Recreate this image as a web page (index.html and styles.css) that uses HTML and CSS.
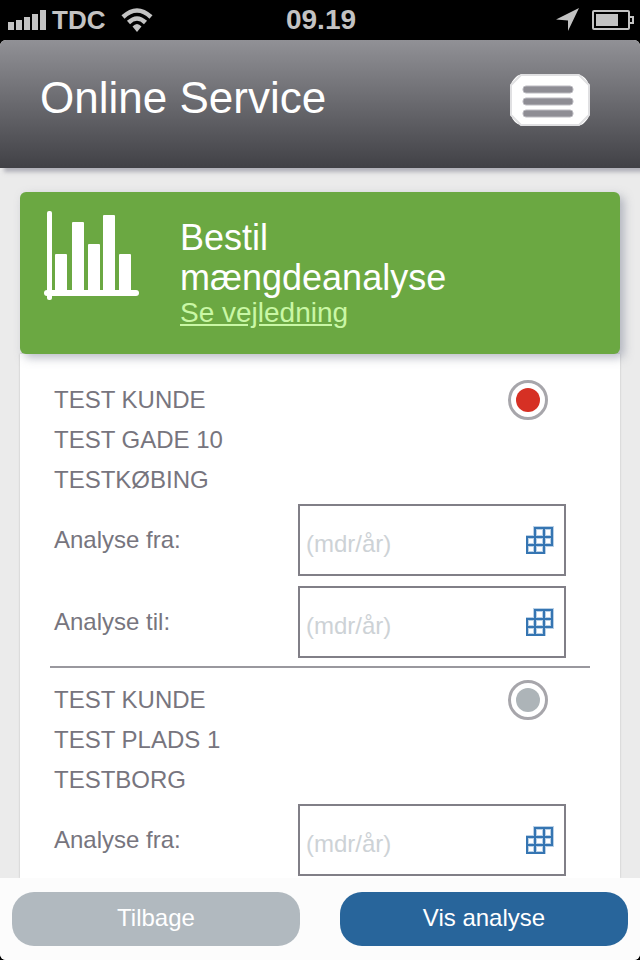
FILE: index.html
```html
<!doctype html>
<html lang="da">
	<head>
		<meta charset="UTF-8">
		<meta name="viewport" content="width=device-width, initial-scale=1">
		<title>Online Service</title>
		<link rel="stylesheet" href="styles.css">
	</head>
<body>
	<!-- status bar -->
	<div class="status">
		<div class="side">
			<svg class="signal" width="38" height="20" viewBox="0 0 38 20" fill="#c3c3c3">
				<path d="M0 12h6v8H0zM8 10h6v10H8zM16 7h6v13h-6zM24 4h6v16h-6zM32 0h6v20h-6z"/>
			</svg>
			<span class="carrier">TDC</span>
			<svg class="wifi" width="32" height="24" viewBox="0 0 32 24" fill="none" stroke="#c3c3c3">
				<path d="M2 9Q16-4 30 9" stroke-width="4.500"/>
				<path d="M7.500 14.500Q16 6.500 24.500 14.500" stroke-width="4.500"/>
				<path d="M16 24L11.500 18.500Q16 13.500 20.500 18.500z" fill="#c3c3c3" stroke="none"/>
			</svg>
		</div>
		<span class="time">09.19</span>
		<div class="side right">
			<svg width="24" height="24" viewBox="0 0 24 24" fill="#c3c3c3">
				<path d="M23 0L12 23V12.500L0 11.500z"/>
			</svg>
			<svg width="42" height="20" viewBox="0 0 42 20" fill="none" stroke="#c3c3c3" stroke-width="2">
				<rect x="1" y="1" width="36" height="18" rx="1"/>
				<path d="M38 7h3v6h-3"/>
				<path d="M4 4h22v12H4z" fill="#c3c3c3" stroke="none"/>
			</svg>
		</div>
	</div>

	<!-- page -->
	<div class="wrap">
		<header class="header">
			<h1>Online Service</h1>
			<button type="button" class="menu" aria-label="Menu">
				<svg width="80" height="52" viewBox="0 0 80 52">
					<path d="M11 1H69Q72 1 75 4T79 11V41Q79 44 75 48T69 51H11Q8 51 5 48T1 41V11Q1 8 5 4T11 1z" fill="#fff" stroke="none"/>
					<path d="M11 1H69L79 11V41L69 51H11L1 41V11z" fill="#fff" stroke="#e0e0e2" stroke-width="2" stroke-linejoin="round"/>
					<g fill="#8e8d94" stroke="#bcbbc1">
						<rect x="13" y="12" width="50" height="7" rx="3"/>
						<rect x="13" y="24" width="50" height="7" rx="3"/>
						<rect x="13" y="36" width="50" height="7" rx="3"/>
					</g>
				</svg>
			</button>
		</header>

		<main class="content">
			<section class="banner">
				<svg class="chart" width="96" height="90" viewBox="0 0 96 90" fill="#fff">
					<rect x="3" y="1" width="5" height="89" rx="2"/>
					<rect x="0" y="80" width="95" height="6" rx="3"/>
					<rect x="11" y="44" width="12" height="40" rx="1"/>
					<rect x="28" y="12" width="12" height="72" rx="1"/>
					<rect x="44" y="34" width="12" height="50" rx="1"/>
					<rect x="59" y="5" width="12" height="79" rx="1"/>
					<rect x="75" y="44" width="12" height="40" rx="1"/>
				</svg>
				<div class="banner-text">
					<h2>Bestil<br>mængdeanalyse</h2>
					<a href="#">Se vejledning</a>
				</div>
			</section>

			<form class="card" id="analyse">
				<div class="customer">
					<div class="pick">
						<label for="kunde1">TEST KUNDE<br>TEST GADE 10<br>TESTKØBING</label>
						<input type="radio" name="kunde" id="kunde1" checked>
					</div>
					<div class="row">
						<label for="fra1">Analyse fra:</label>
						<div class="field">
							<input type="text" id="fra1" placeholder="(mdr/år)">
							<svg class="cal" width="28" height="28" viewBox="0 0 28 28">
								<path class="glow" d="M9 2h17v17h-8v8H1V11h8zM9 11h17M1 19h17M9 11v16M18 2v17"/>
								<path d="M9 2h17v17h-8v8H1V11h8zM9 11h17M1 19h17M9 11v16M18 2v17"/>
							</svg>
						</div>
					</div>
					<div class="row">
						<label for="til1">Analyse til:</label>
						<div class="field">
							<input type="text" id="til1" placeholder="(mdr/år)">
							<svg class="cal" width="28" height="28" viewBox="0 0 28 28">
								<path class="glow" d="M9 2h17v17h-8v8H1V11h8zM9 11h17M1 19h17M9 11v16M18 2v17"/>
								<path d="M9 2h17v17h-8v8H1V11h8zM9 11h17M1 19h17M9 11v16M18 2v17"/>
							</svg>
						</div>
					</div>
				</div>
				<div class="customer">
					<div class="pick">
						<label for="kunde2">TEST KUNDE<br>TEST PLADS 1<br>TESTBORG</label>
						<input type="radio" name="kunde" id="kunde2">
					</div>
					<div class="row">
						<label for="fra2">Analyse fra:</label>
						<div class="field">
							<input type="text" id="fra2" placeholder="(mdr/år)">
							<svg class="cal" width="28" height="28" viewBox="0 0 28 28">
								<path class="glow" d="M9 2h17v17h-8v8H1V11h8zM9 11h17M1 19h17M9 11v16M18 2v17"/>
								<path d="M9 2h17v17h-8v8H1V11h8zM9 11h17M1 19h17M9 11v16M18 2v17"/>
							</svg>
						</div>
					</div>
				</div>
			</form>
		</main>

		<footer class="footer">
			<button type="button" class="btn back">Tilbage</button>
			<button type="submit" form="analyse" class="btn show">Vis analyse</button>
		</footer>
	</div>
</body>
</html>
```

FILE: styles.css
```css
*{
	margin: 0;
	padding: 0;
	box-sizing: border-box;
}
body{
	display: flex;
	flex-direction: column;
	min-height: 100vh;
	background: #000;
	color: #77757e;
	font-family: "Liberation Sans", Arial, sans-serif;
	font-size: 24px;
	line-height: 40px;
}
svg{
	display: block;
	flex: none;
}
button, input{
	font: inherit;
}

/* status bar */
.status{
	display: flex;
	align-items: center;
	height: 40px;
	padding: 0 6px 0 8px;
	color: #c3c3c3;
	font-size: 28px;
	font-weight: bold;
}
.side{
	display: flex;
	flex: 1;
	align-items: center;
	gap: 6px;
}
.side.right{
	justify-content: flex-end;
	gap: 12px;
}
.carrier{
	font-size: 26px;
}
.wifi{
	margin-left: 10px;
}

/* page */
.wrap{
	display: flex;
	flex: 1;
	flex-direction: column;
	overflow: hidden;
	border-radius: 6px;
	background: #ebebeb;
}
.header{
	display: flex;
	align-items: center;
	justify-content: space-between;
	height: 128px;
	padding: 0 50px 8px 40px;
	background: linear-gradient(#919196, #414146);
	box-shadow: 4px 4px 4px rgba(120,120,135,.5);
	color: #fff;
}
.header h1{
	padding-bottom: 4px;
	font-size: 44px;
	font-weight: normal;
}
.menu{
	border: none;
	background: none;
}
.content{
	display: flex;
	flex: 1;
	flex-direction: column;
	padding: 24px 20px 0;
}
.banner{
	position: relative;
	display: flex;
	gap: 40px;
	padding: 18px 24px 26px;
	border-radius: 6px;
	background: #6ba842;
	box-shadow: 4px 4px 10px rgba(120,125,145,.5);
	color: #fff;
}
.banner-text{
	padding-top: 8px;
}
.banner h2{
	font-size: 36px;
	font-weight: normal;
}
.banner a{
	display: block;
	color: #c9f7a5;
	font-size: 28px;
	line-height: 30px;
}
.card{
	flex: 1;
	padding: 14px 30px 0;
	background: #fff;
	box-shadow: 0 0 2px rgba(0,0,0,.2);
}

/* customer */
.customer{
	padding: 12px 24px 8px 4px;
}
.customer + .customer{
	padding-bottom: 2px;
	border-top: 2px solid #99989e;
}
.pick{
	display: flex;
	align-items: flex-start;
	justify-content: space-between;
	padding-right: 18px;
	margin-bottom: 4px;
}
.pick input{
	appearance: none;
	width: 40px;
	height: 40px;
	padding: 5px;
	border: 3px solid #a7a6ab;
	border-radius: 50%;
	background: #adb4b8 content-box;
}
.pick input:checked{
	background-color: #d63024;
}
.row{
	display: flex;
	align-items: center;
	justify-content: space-between;
}
.row + .row{
	margin-top: 10px;
}
.field{
	display: flex;
	align-items: center;
	width: 268px;
	height: 72px;
	padding: 0 10px 0 6px;
	border: 2px solid #817f87;
}
.field input{
	flex: 1;
	min-width: 0;
	height: 68px;
	padding-top: 8px;
	border: none;
	background: none;
	color: #77757e;
}
.field input::placeholder{
	color: #cdd2d6;
	opacity: 1;
}
.cal{
	fill: none;
	stroke: #3575b2;
	stroke-width: 2;
}
.cal .glow{
	fill: #fff;
	stroke: #b9d0e6;
	stroke-width: 4;
}

/* bottom buttons */
.footer{
	display: flex;
	gap: 40px;
	padding: 14px 12px;
	background: #fcfcfc;
}
.btn{
	flex: 1;
	height: 54px;
	padding-bottom: 2px;
	border: none;
	border-radius: 22px;
	color: #fff;
}
.back{
	background: #b1b9bf;
}
.show{
	background: #28659b;
}
```
